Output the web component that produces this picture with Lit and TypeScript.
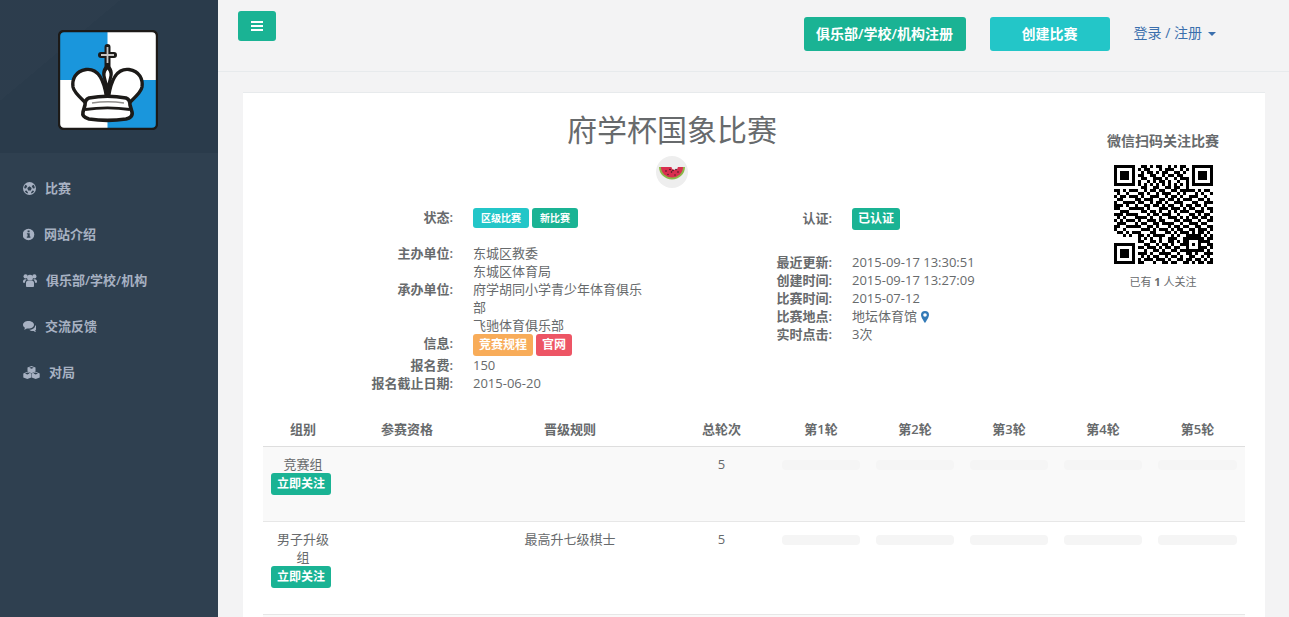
import { LitElement, html, css, svg } from 'lit'
import { customElement } from 'lit/decorators.js'

const QR_ROWS = [
  '111111100110101100101011001111111',
  '100000101011000101110010101000001',
  '101110100101101011001101001011101',
  '101110101100110010110110001011101',
  '101110100110011101001011101011101',
  '100000101001010110100100101000001',
  '111111101010101010101010101111111',
  '000000000110011001101100100000000',
  '110101110010110110011011111010110',
  '010010001101001011100101000101001',
  '101101110100111001011010011100100',
  '011000011011100110110101110011010',
  '100111101100101101001110001100111',
  '111010010011011010110010110110100',
  '110001111101000111011101011001011',
  '001110000110110100101011100111001',
  '111011110001011011100100011010110',
  '010100011110100100111010101101101',
  '101011101001110110001101110010011',
  '011100010110011011110010011101100',
  '110011111001101000101101100110011',
  '100100000111010111010110011011101',
  '011010111000110001101011101011010',
  '000101001101011110010100111110101',
  '000000001010100100111001100011011',
  '000000001100110100110101100011110',
  '111111100011001011010011111110011',
  '100000101101110101101100010101101',
  '101110100010011010011011101011010',
  '101110101110100111100100110100111',
  '101110100101011001011010011001010',
  '100000101011101110100110110110101',
  '111111101100010011011001101011011',
]

// finder squares and the small alignment square always win over the data rows
function qrCell(r: number, c: number) {
  const square = (top: number, left: number, size: number) => {
    const y = r - top
    const x = c - left
    if (y < 0 || x < 0 || y >= size || x >= size) return null
    return Math.min(x, y, size - 1 - x, size - 1 - y) !== 1
  }
  return (
    square(0, 0, 7) ??
    square(0, 26, 7) ??
    square(26, 0, 7) ??
    square(24, 24, 5) ??
    QR_ROWS[r][c] === '1'
  )
}

function qrPath() {
  let d = ''
  for (let r = 0; r < 33; r++) {
    for (let c = 0; c < 33; c++) {
      if (qrCell(r, c)) d += `M${c} ${r}h1v1h-1z`
    }
  }
  return d
}

const logo = html`<svg class="logo" viewBox="0 0 100 100" width="100" height="100">
  <rect x="1" y="1" width="98" height="98" rx="5" fill="#fff"/>
  <path d="M6 1H49.500V50H1V6a5 5 0 0 1 5-5zM49.500 50H99V94a5 5 0 0 1-5 5H49.500z" fill="#1a96dc"/>
  <rect x="1" y="1" width="98" height="98" rx="5" fill="none" stroke="#1c1a18" stroke-width="2.400"/>
  <path d="M49.500 17V36M43 25H56" stroke="#1c1a18" stroke-width="6" stroke-linecap="round" fill="none"/>
  <path d="M49.500 17V33M43 25H56" stroke="#c9c7c5" stroke-width="1.800" fill="none"/>
  <path d="M48.500 67C46 50 40 38 28 39.500 17 41 14 50 15 57c1 6 9 12 14 17" fill="#fff" stroke="#1c1a18" stroke-width="3.400"/>
  <path d="M50.500 67C53 50 59 38 71 39.500 82 41 85 50 84 57c-1 6-9 12-14 17" fill="#fff" stroke="#1c1a18" stroke-width="3.400"/>
  <path d="M49.500 34c5 3 6.500 9 4.500 14l-3.500 20h-2L45 48c-2-5-.5-11 4.500-14z" fill="#1c1a18"/>
  <path d="M49.500 39.500c2 2 2.500 5 1.500 8l-1.500 6-1.500-6c-1-3-.5-6 1.500-8z" fill="#fff"/>
  <path d="M31 68c11-2 26-2 37 0 3 1 4 4 4 7l2 7c1 4-2 6-6 7-13 2-24 2-37 0-4-1-7-3-6-7l2-7c0-3 1-6 4-7z" fill="#fff" stroke="#1c1a18" stroke-width="3.600"/>
  <path d="M34 73c10-1.500 22-1.500 32 0" fill="none" stroke="#8f8d8b" stroke-width="1.400"/>
  <path d="M27 79.500c14-2 31-2 45 0" fill="none" stroke="#1c1a18" stroke-width="2.800"/>
</svg>`

const melon = html`<svg class="melon" viewBox="0 0 32 32" width="32" height="32">
  <circle cx="16" cy="16" r="16" fill="#eeeeee"/>
  <path d="M3 11H29A13 12.500 0 0 1 3 11z" fill="#8cb84a"/>
  <path d="M5 11H27A11 10.500 0 0 1 5 11z" fill="#d92f4f"/>
  <path d="M15.500 10.500a3.200 3.200 0 0 0 6.400 0z" fill="#eeeeee"/>
  <g fill="#3a1a22">
    <circle cx="10" cy="15" r=".8"/><circle cx="14" cy="13.500" r=".8"/><circle cx="17" cy="14.500" r=".8"/>
    <circle cx="20" cy="13.500" r=".8"/><circle cx="15.500" cy="16" r=".8"/><circle cx="22" cy="16" r=".8"/>
    <circle cx="12" cy="18.500" r=".7"/><circle cx="19" cy="19" r=".7"/>
  </g>
</svg>`

const navIcons = {
  futbol: svg`
    <circle cx="6.500" cy="6.500" r="6.500"/>
    <g fill="#2f4050">
      <path d="M2.500 2.800 4.300 4 3 6.500 1.200 6.200C1.200 5 1.700 3.700 2.500 2.800zM10.500 2.800 8.700 4 10 6.500 11.800 6.200C11.800 5 11.300 3.700 10.500 2.800zM3.500 8.500 5 10.500 4.500 11.500C3.300 11 2.300 10 1.800 9zM9.500 8.500 8 10.500 8.500 11.500C9.700 11 10.700 10 11.200 9z"/>
    </g>
    <path d="M6.500 4.300 8.700 6 7.900 8.600H5.100L4.300 6z" fill="#2f4050"/>`,
  info: svg`
    <circle cx="5.500" cy="6.500" r="5.800"/>
    <path d="M4.600 2.500h2v1.800h-2zM3.900 5.200h2.800v3.400h.7v1.100H3.800V8.600h.8V6.300h-.7z" fill="#2f4050"/>`,
  users: svg`
    <circle cx="7" cy="3.800" r="3"/>
    <circle cx="2.600" cy="2.400" r="2.100"/><circle cx="11.400" cy="2.400" r="2.100"/>
    <path d="M3 8.800c0-1.300 1-2.300 2.200-2.300 1.200.7 2.400.7 3.600 0 1.200 0 2.200 1 2.200 2.300v3c0 .8-.4 1.200-1.100 1.200H4.100C3.400 13 3 12.600 3 11.800z"/>
    <path d="M2.600 5.200 3.900 5.600C2.800 6.200 2 7.200 2 8.700H.8C.2 8.700 0 8.300 0 7.700 0 6.200.8 4.900 2.600 5.200zM11.400 5.200 10.100 5.600C11.200 6.200 12 7.200 12 8.700h1.200c.6 0 .8-.4.8-1 0-1.500-.8-2.800-2.600-2.500z"/>`,
  comments: svg`
    <path d="M5.500 1C2.500 1 0 2.600 0 4.800c0 1.200.8 2.300 2 3-.2.700-.5 1.200-1 1.700 1 0 2-.5 2.700-1.100.6.100 1.200.2 1.800.2 3 0 5.500-1.700 5.500-3.800S8.500 1 5.500 1z"/>
    <path d="M12.100 5.300c.1 2.600-2.500 4.200-5.800 4.500.8.800 2 1.200 3.300 1.200.3 0 .8 0 1.100-.1.600.6 1.400 1 2.300 1.100-.4-.5-.7-1-.8-1.600C13.200 9.700 14 8.700 14 7.600c0-1-.7-1.800-1.900-2.300z"/>`,
  cubes: svg`
    <path d="M8.500 0 12.500 1.600V5.600L8.500 7.200 4.500 5.600V1.600z"/>
    <path d="M4.300 5.800 8.300 7.400V11.400L4.300 13 .3 11.400V7.400z"/>
    <path d="M12.700 5.800 16.700 7.400V11.400L12.700 13 8.700 11.400V7.400z"/>
    <path d="M8.500 2.800 6.200 1.800 8.500.9 10.800 1.800zM4.300 8.500 2 7.500 4.300 6.600 6.600 7.500zM12.700 8.500 10.400 7.500 12.700 6.600 15 7.500z" fill="#2f4050"/>`,
}

const navItems = [
  { icon: navIcons.futbol, w: 13, label: '比赛' },
  { icon: navIcons.info, w: 12, label: '网站介绍' },
  { icon: navIcons.users, w: 14, label: '俱乐部/学校/机构' },
  { icon: navIcons.comments, w: 13, label: '交流反馈' },
  { icon: navIcons.cubes, w: 17, label: '对局' },
]

const rounds = ['第1轮', '第2轮', '第3轮', '第4轮', '第5轮']

@customElement('app-root')
export class AppRoot extends LitElement {
  static styles = css`
    :host {
      display: block;
      height: 617px;
      overflow: hidden;
      font-family: 'Open Sans', 'Noto Sans CJK SC', sans-serif;
      font-size: 13px;
      line-height: 18px;
      color: #676a6c;
    }
    .layout { display: flex; height: 617px; background: #f3f3f4; }

    .sidebar { width: 218px; flex: none; background: #2f4050; }
    .brand {
      height: 153px;
      display: flex;
      justify-content: center;
      padding: 30px 2px 0 0;
      box-sizing: border-box;
      background:
        linear-gradient(140deg, rgba(255, 255, 255, 0.012) 30%, transparent 30%),
        #2a3b4b;
    }
    .logo { display: block; }
    .nav { padding-top: 12px; }
    .nav-item {
      height: 46px;
      display: flex;
      align-items: center;
      gap: 9px;
      padding-left: 23px;
      color: #a7b1c2;
      font-weight: 600;
    }
    .nav-item svg { fill: #a7b1c2; flex: none; }

    .main { flex: 1; min-width: 0; }
    .topbar {
      height: 71px;
      border-bottom: 1px solid #e7eaec;
      display: flex;
      padding: 0 73px 0 20px;
    }
    .menu {
      width: 38px;
      height: 30px;
      margin-top: 11px;
      border-radius: 3px;
      background: #1ab394;
      display: flex;
      flex-direction: column;
      align-items: center;
      justify-content: center;
      gap: 2px;
    }
    .menu i { display: block; width: 12px; height: 2px; background: #fff; }
    .actions {
      margin-left: auto;
      display: flex;
      align-items: center;
      height: 34px;
      margin-top: 17px;
    }
    .btn {
      height: 34px;
      border-radius: 3px;
      color: #fff;
      font-size: 14px;
      font-weight: 600;
      display: flex;
      align-items: center;
      justify-content: center;
    }
    .btn-club { background: #1ab394; width: 162px; margin-right: 24px; }
    .btn-create { background: #23c6c8; width: 120px; margin-right: 24px; }
    .login { color: #3a6fad; font-size: 14px; display: flex; align-items: center; margin-top: -2px; }
    .caret {
      margin-left: 6px;
      margin-top: 1px;
      border-top: 4px solid #3a6fad;
      border-left: 4px solid transparent;
      border-right: 4px solid transparent;
    }

    .content { padding: 20px 24px 0 25px; }
    .card {
      background: #fff;
      border-top: 1px solid #e7eaec;
      padding: 0 20px;
      height: 540px;
    }
    .head { display: flex; }
    .summary { width: 818px; flex: none; }
    .title {
      margin: 0;
      padding-top: 20px;
      font-size: 30px;
      line-height: 33px;
      font-weight: 400;
      text-align: center;
    }
    .melon { display: block; margin: 10px auto 20px; }
    .columns { display: flex; }
    .col-left { width: 410px; flex: none; }
    .rows { display: grid; align-content: start; }
    .col-left .rows { grid-template-columns: 190px 172px; column-gap: 20px; }
    .col-right .rows { grid-template-columns: 159px 228px; column-gap: 20px; }
    .k { text-align: right; font-weight: 600; }
    .status-row { height: 36px; }
    .cert-row { height: 45px; padding-top: 1px; box-sizing: border-box; }
    .badges { display: flex; gap: 3px; align-items: flex-start; }
    .badge {
      height: 22px;
      line-height: 22px;
      padding: 0 6px;
      border-radius: 3px;
      color: #fff;
      font-size: 12px;
      font-weight: 600;
    }
    .badge-sm { height: 20px; line-height: 20px; padding: 0 8px; font-size: 10px; font-weight: 700; }
    .cyan { background: #23c6c8; }
    .green { background: #1ab394; }
    .orange { background: #f8ac59; }
    .red { background: #ed5565; }
    .cert-badge { display: inline-block; margin-top: -1px; }
    .pin { vertical-align: -2px; margin-left: 4px; }

    .qr-box { width: 164px; flex: none; text-align: center; padding-top: 39px; }
    .qr-title { font-size: 14px; font-weight: 600; margin-bottom: 15px; }
    .qr { display: block; margin: 0 auto 9px; filter: blur(0.3px); }
    .qr-note { font-size: 11px; }
    .qr-note b { font-weight: 700; }

    table {
      width: 982px;
      margin-top: 20px;
      border-collapse: collapse;
      table-layout: fixed;
    }
    th, td { padding: 8px; text-align: center; vertical-align: top; }
    th { height: 18px; font-weight: 600; border-bottom: 1px solid #dedede; }
    td { border-bottom: 1px solid #e7e7e7; }
    .odd td { background: #f9f9f9; }
    .follow {
      display: block;
      width: 60px;
      height: 22px;
      line-height: 22px;
      margin-bottom: 18px;
      border-radius: 3px;
      background: #1ab394;
      color: #fff;
      font-size: 12px;
      font-weight: 700;
    }
    .bar { height: 10px; margin-top: 5px; border-radius: 4px; background: #f5f5f5; }
  `

  private roundCells() {
    return rounds.map(() => html`<td><div class="bar"></div></td>`)
  }

  render() {
    return html`
      <div class="layout">
        <aside class="sidebar">
          <div class="brand">${logo}</div>
          <nav class="nav">
            ${navItems.map(
              (n) => html`<div class="nav-item">
                <svg width=${n.w} height="13" viewBox="0 0 ${n.w} 13">${n.icon}</svg>
                <span>${n.label}</span>
              </div>`,
            )}
          </nav>
        </aside>
        <div class="main">
          <header class="topbar">
            <div class="menu"><i></i><i></i><i></i></div>
            <div class="actions">
              <div class="btn btn-club">俱乐部/学校/机构注册</div>
              <div class="btn btn-create">创建比赛</div>
              <div class="login">登录 / 注册<span class="caret"></span></div>
            </div>
          </header>
          <div class="content">
            <section class="card">
              <div class="head">
                <div class="summary">
                  <h1 class="title">府学杯国象比赛</h1>
                  ${melon}
                  <div class="columns">
                    <div class="col-left">
                      <div class="rows">
                        <div class="k status-row">状态:</div>
                        <div class="badges status-row">
                          <span class="badge badge-sm cyan">区级比赛</span>
                          <span class="badge badge-sm green">新比赛</span>
                        </div>
                        <div class="k">主办单位:</div>
                        <div>东城区教委<br />东城区体育局</div>
                        <div class="k">承办单位:</div>
                        <div>府学胡同小学青少年体育俱乐部<br />飞驰体育俱乐部</div>
                        <div class="k">信息:</div>
                        <div class="badges">
                          <span class="badge orange">竞赛规程</span>
                          <span class="badge red">官网</span>
                        </div>
                        <div class="k">报名费:</div>
                        <div>150</div>
                        <div class="k">报名截止日期:</div>
                        <div>2015-06-20</div>
                      </div>
                    </div>
                    <div class="col-right">
                      <div class="rows">
                        <div class="k cert-row">认证:</div>
                        <div class="cert-row"><span class="badge green cert-badge">已认证</span></div>
                        <div class="k">最近更新:</div>
                        <div>2015-09-17 13:30:51</div>
                        <div class="k">创建时间:</div>
                        <div>2015-09-17 13:27:09</div>
                        <div class="k">比赛时间:</div>
                        <div>2015-07-12</div>
                        <div class="k">比赛地点:</div>
                        <div>
                          地坛体育馆<svg class="pin" width="8" height="12" viewBox="0 0 8 12">
                            <path fill-rule="evenodd" fill="#337ab7" d="M4 0a4 4 0 0 1 4 4c0 2-2.500 6-4 8-1.500-2-4-6-4-8a4 4 0 0 1 4-4zm0 2.200a1.800 1.800 0 1 0 0 3.600 1.800 1.800 0 0 0 0-3.600z"/>
                          </svg>
                        </div>
                        <div class="k">实时点击:</div>
                        <div>3次</div>
                      </div>
                    </div>
                  </div>
                </div>
                <div class="qr-box">
                  <div class="qr-title">微信扫码关注比赛</div>
                  <svg class="qr" width="99" height="99" viewBox="0 0 33 33" shape-rendering="crispEdges">
                    <path d=${qrPath()} fill="#000"/>
                  </svg>
                  <div class="qr-note">已有 <b>1</b> 人关注</div>
                </div>
              </div>
              <table>
                <colgroup>
                  <col style="width:80px" /><col style="width:128px" /><col style="width:198px" />
                  <col style="width:105px" /><col style="width:94px" /><col style="width:94px" />
                  <col style="width:94px" /><col style="width:94px" /><col style="width:95px" />
                </colgroup>
                <thead>
                  <tr>
                    <th>组别</th><th>参赛资格</th><th>晋级规则</th><th>总轮次</th>
                    ${rounds.map((r) => html`<th>${r}</th>`)}
                  </tr>
                </thead>
                <tbody>
                  <tr class="odd">
                    <td>竞赛组<span class="follow">立即关注</span></td>
                    <td></td><td></td><td>5</td>
                    ${this.roundCells()}
                  </tr>
                  <tr>
                    <td>男子升级组<span class="follow">立即关注</span></td>
                    <td></td><td>最高升七级棋士</td><td>5</td>
                    ${this.roundCells()}
                  </tr>
                  <tr class="odd">
                    <td>&nbsp;</td><td></td><td></td><td></td>
                    ${this.roundCells()}
                  </tr>
                </tbody>
              </table>
            </section>
          </div>
        </div>
      </div>
    `
  }
}
